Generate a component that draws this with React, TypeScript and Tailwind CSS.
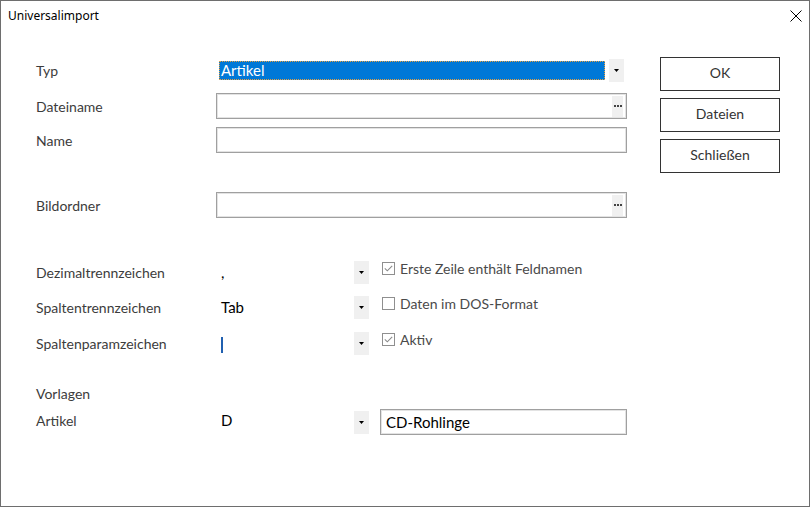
import React from "react";

const font = { fontFamily: "Lato, 'Noto Sans', sans-serif" };

function Arrow() {
  return (
    <svg width="5" height="3" viewBox="0 0 5 3">
      <path d="M0 0H5L2.5 3Z" fill="#000" />
    </svg>
  );
}

function DropBtn() {
  return (
    <div className="w-[15px] h-[23px] bg-[#f0f0f0] flex items-center justify-center">
      <Arrow />
    </div>
  );
}

function Dots() {
  return (
    <div className="w-[11px] h-[21px] bg-[#f0f0f0] flex items-center justify-center gap-[1px]">
      <div className="w-[2px] h-[2px] bg-[#444]" />
      <div className="w-[2px] h-[2px] bg-[#444]" />
      <div className="w-[2px] h-[2px] bg-[#444]" />
    </div>
  );
}

function TextBox({ dots, value, w = "w-[411px]" }: { dots?: boolean; value?: string; w?: string }) {
  return (
    <div className={`${w} h-[26px] border border-[#a0a0a0] shadow-[inset_0_0_0_1px_#e3e3e3] flex items-center justify-between pl-[5px] pr-[3px] text-[15px] text-black`}>
      <span>{value}</span>
      {dots && <Dots />}
    </div>
  );
}

function Check({ checked }: { checked: boolean }) {
  return (
    <div className="w-[13px] h-[13px] border border-[#8f8f8f] bg-white flex items-center justify-center">
      {checked && (
        <svg width="9" height="7" viewBox="0 0 9 7">
          <path d="M0.8 3.4L3.3 5.8L8.2 0.8" stroke="#8a8a8a" strokeWidth="1.1" fill="none" />
        </svg>
      )}
    </div>
  );
}

function Label({ children, cls }: { children: React.ReactNode; cls?: string }) {
  return <div className={`w-[180px] text-[14px] text-[#3c3c3c] ${cls ?? ""}`}>{children}</div>;
}

function SmallRow({ label, value, check, checked, mt }: { label: string; value: React.ReactNode; check: string; checked: boolean; mt: string }) {
  return (
    <div className={`flex items-center h-[23px] ${mt}`}>
      <Label>{label}</Label>
      <div className="w-[138px] pl-[5px] text-[15px] text-black flex items-center">{value}</div>
      <DropBtn />
      <div className="ml-[13px] flex items-center gap-[5px] -mt-[8px]">
        <Check checked={checked} />
        <span className="text-[14px] text-[#4a4a4a]">{check}</span>
      </div>
    </div>
  );
}

function Btn({ children }: { children: React.ReactNode }) {
  return (
    <div className="w-[120px] h-[34px] border border-[#333] flex items-center justify-center text-[14px] text-[#333] pb-[3px]">
      {children}
    </div>
  );
}

export default function App() {
  return (
    <div className="w-[810px] h-[507px] border border-[#6e6e6e] bg-white flex flex-col" style={font}>
      <div className="h-[30px] flex items-center justify-between pl-[7px] pr-[7px] shrink-0">
        <span className="text-[12px] text-black" style={{ fontFamily: "'Noto Sans', sans-serif" }}>Universalimport</span>
        <svg width="12" height="12" viewBox="0 0 12 12">
          <path d="M0.5 0.5L11.5 11.5M11.5 0.5L0.5 11.5" stroke="#000" strokeWidth="1" />
        </svg>
      </div>
      <div className="flex">
        <div className="pl-[35px] flex flex-col">
          <div className="flex items-center h-[23px] mt-[28px]">
            <Label>Typ</Label>
            <div className="w-[411px] flex items-center justify-between">
              <div className="ml-[3px] w-[386px] h-[19px] bg-[#0078d7] border border-dotted border-[#e8a040] text-white text-[15px] leading-[17px] pl-[1px]">
                Artikel
              </div>
              <div className="mr-[3px]">
                <DropBtn />
              </div>
            </div>
          </div>
          <div className="flex items-center mt-[11px]">
            <Label>Dateiname</Label>
            <TextBox dots />
          </div>
          <div className="flex items-center mt-[8px]">
            <Label>Name</Label>
            <TextBox />
          </div>
          <div className="flex items-center mt-[39px]">
            <Label>Bildordner</Label>
            <TextBox dots />
          </div>
          <SmallRow mt="mt-[43px]" label="Dezimaltrennzeichen" value="," check="Erste Zeile enthält Feldnamen" checked />
          <SmallRow mt="mt-[12px]" label="Spaltentrennzeichen" value="Tab" check="Daten im DOS-Format" checked={false} />
          <SmallRow
            mt="mt-[13px]"
            label="Spaltenparamzeichen"
            value={<div className="w-[2px] h-[16px] bg-[#2060b0] mt-[2px]" />}
            check="Aktiv"
            checked
          />
          <div className="mt-[29px] h-[18px] flex items-center text-[14px] text-[#3c3c3c]">Vorlagen</div>
          <div className="flex items-center mt-[7px] h-[26px]">
            <Label cls="-mt-[3px]">Artikel</Label>
            <div className="w-[138px] pl-[5px] text-[15px] text-black -mt-[3px]">D</div>
            <DropBtn />
            <div className="ml-[11px]">
              <TextBox value="CD-Rohlinge" w="w-[247px]" />
            </div>
          </div>
        </div>
        <div className="ml-[33px] mt-[26px] flex flex-col gap-[7px]">
          <Btn>OK</Btn>
          <Btn>Dateien</Btn>
          <Btn>Schließen</Btn>
        </div>
      </div>
    </div>
  );
}
